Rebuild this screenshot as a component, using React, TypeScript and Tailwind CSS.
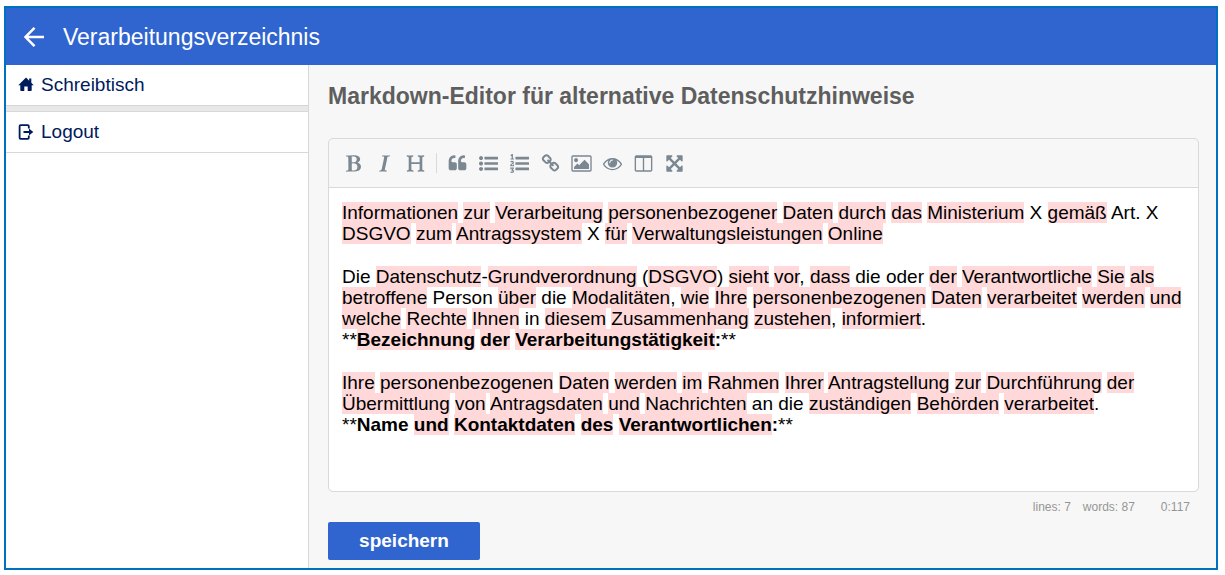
import React from 'react';

interface IconProps {
  path: string;
  viewBox?: string;
  className?: string;
}

const Icon: React.FC<IconProps> = ({ path, viewBox = '0 0 1792 1792', className = 'size-[19px]' }) => (
  <svg viewBox={viewBox} className={className} fill="currentColor" aria-hidden="true">
    <path d={path} />
  </svg>
);

const BAR = 'v192q0 13-9.500 22.500t-22.500 9.500h-1216q-13 0-22.500-9.500t-9.500-22.500v-192q0-13 9.500-22.500t22.500-9.500h1216q13 0 22.500 9.500t9.500 22.500z';
const DOT = 'q0 80-56 136t-136 56-136-56-56-136 56-136 136-56 136 56 56 136z';
const QUOTE = 'v384q0 80-56 136t-136 56h-384q-80 0-136-56t-56-136v-704q0-104 40.500-198.500t109.500-163.500 163.500-109.500 198.500-40.500h64q26 0 45 19t19 45v128q0 26-19 45t-45 19h-64q-106 0-181 75t-75 181v32q0 40 28 68t68 28h224q80 0 136 56t56 136z';

const FORMAT_TOOLS = [
  {
    label: 'Fett',
    path: 'M747 1521q74 32 140 32 376 0 376-335 0-114-41-180-27-44-61.5-74t-67.5-46.5-80.5-25-84-10.5-94.5-2q-73 0-101 10 0 53-.5 159t-.5 158q0 8-1 67.5t-.5 96.5 4.500 83.500 12 66.500zm-14-746q42 7 109 7 82 0 143-13t110-44.500 74.500-89.500 25.500-142q0-70-29-122.500t-79-82-108-43.500-124-14q-50 0-130 13 0 50 4 151t4 152q0 27-.5 80t-.5 79q0 46 1 69zm-541 889l2-94q15-4 85-16t106-27q7-12 12.500-27t8.500-33.500 5.500-32.500 3-37.500.5-34v-65.500q0-982-22-1025-4-8-22-14.500t-44.500-11-49.500-7-48.500-4.500-30.500-3l-4-83q98-2 340-11.500t373-9.500q23 0 68 .5t68 .5q70 0 136.500 13t128.500 42 108 71 74 104.500 28 137.500q0 52-16.500 95.500t-39 72-64.500 57.500-73 45-84 40q154 35 256.500 134t102.500 248q0 100-35 179.500t-93.500 130.500-138 85.500-163.500 48.500-176 14q-44 0-132-3t-132-3q-106 0-307 11t-231 12z',
  },
  {
    label: 'Kursiv',
    path: 'M384 1662l17-85q6-2 81.500-21.500t111.500-37.500q28-35 41-101 1-7 62-289t114-543.500 52-296.500v-25q-24-13-54.500-18.500t-69.500-8-58-5.500l19-103q33 2 120 6.500t149.500 7 120.500 2.500q48 0 98.500-2.500t121-7 98.500-6.500q-5 39-19 89-30 10-101.500 28.500t-108.500 33.500q-8 19-14 42.500t-9 40-7.500 45.500-6.500 42q-27 148-87.500 419.500t-77.500 355.500q-2 9-13 58t-20 90-16 83.500-6 57.500l1 18q17 4 185 31-3 44-16 99-11 0-32.500 1.500t-32.500 1.500q-29 0-87-10t-86-10q-138-2-206-2-51 0-143 9t-121 11z',
  },
  {
    label: 'Überschrift',
    path: 'M1682 1664q-44 0-132.500-3.500t-133.500-3.500q-44 0-132 3.500t-132 3.500q-24 0-37-20.500t-13-45.500q0-31 17-46t39-17 51-7 45-15q33-21 33-140l-1-391q0-21-1-31-13-4-50-4h-675q-38 0-51 4-1 10-1 31l-1 371q0 142 37 164 16 10 48 13t57 3.500 45 15 20 45.500q0 26-12.500 48t-36.500 22q-47 0-139.500-3.500t-138.500-3.500q-43 0-128 3.500t-127 3.500q-23 0-35.500-21t-12.500-45q0-30 15.500-45t36-17.500 47.500-7.500 42-15q33-23 33-143l-1-57v-813q0-3 .5-26t0-36.500-1.500-38.500-3.500-42-6.500-36.500-11-31.500-16-18q-15-10-45-12t-53-2-41-14-18-45q0-26 12-48t36-22q46 0 138.500 3.500t138.500 3.500q42 0 126.500-3.500t126.500-3.500q25 0 37.500 22t12.500 48q0 30-17 43.500t-38.500 14.500-49.500 4-43 13q-35 21-35 160l1 320q0 21 1 32 13 3 39 3h699q25 0 38-3 1-11 1-32l1-320q0-139-35-160-18-11-58.500-12.500t-66-13-25.500-49.500q0-26 12.500-48t37.500-22q44 0 132 3.500t132 3.500q43 0 129-3.500t129-3.500q25 0 37.500 22t12.500 48q0 30-17.500 44t-40 14.500-51.500 3-44 12.500q-35 23-35 161l1 943q0 119 34 140 16 10 46 13.500t53.500 4.500 41.500 15.500 18 44.500q0 26-12 48t-36 22z',
  },
];

const INSERT_TOOLS = [
  { label: 'Zitat', path: `M832 960${QUOTE}M1728 960${QUOTE}` },
  {
    label: 'Liste',
    path: `M384 1408${DOT}M384 896${DOT}M384 384${DOT}M1792 1312${BAR}M1792 800${BAR}M1792 288${BAR}`,
  },
  {
    label: 'Nummerierte Liste',
    path: `M381 1620q0 80-54.500 126t-135.500 46q-106 0-172-66l57-88q49 45 106 45 29 0 50.500-14.500t21.500-42.500q0-64-105-56l-26-56q8-10 32.500-43.500t42.500-54 37-38.500v-1q-16 0-48.500 1t-48.500 1v53h-106v-152h333v88l-95 115q51 12 81 49t30 88zm2-627v159h-362q-6-36-6-54 0-51 23.500-93t56.500-68 66-47.500 56.500-43.500 23.500-45q0-25-14.500-38.500t-39.500-13.500q-46 0-81 58l-85-59q24-51 71.500-79.500t105.500-28.500q73 0 123 41.500t50 112.500q0 50-34 91.500t-75 64.500-75.500 50.500-35.500 52.500h127v-60h105zM384 413v99h-335v-99h107q0-41 .5-121.500t.5-121.500v-12h-2q-8 17-50 54l-71-76 136-127h106v404h108zM1792 1312${BAR}M1792 800${BAR}M1792 288${BAR}`,
  },
  {
    label: 'Link',
    path: 'M1520 1216q0-40-28-68l-208-208q-28-28-68-28-42 0-72 32 3 3 19 18.500t21.500 21.500 15 19 13 25.500 3.500 27.500q0 40-28 68t-68 28q-15 0-27.500-3.500t-25.500-13-19-15-21.500-21.500-18.500-19q-33 31-33 73 0 40 28 68l206 207q27 27 68 27 40 0 68-26l147-146q28-28 28-67zm-703-705q0-40-28-68l-206-207q-28-28-68-28-39 0-68 27l-147 146q-28 28-28 67 0 40 28 68l208 208q27 27 68 27 42 0 72-31-3-3-19-18.500t-21.500-21.500-15-19-13-25.500-3.500-27.500q0-40 28-68t68-28q15 0 27.500 3.500t25.500 13 19 15 21.500 21.500 18.500 19q33-31 33-73zm895 705q0 120-85 203l-147 146q-83 83-203 83-121 0-204-85l-206-207q-83-83-83-203 0-123 88-209l-88-88q-86 88-208 88-120 0-204-84l-208-208q-84-84-84-204t85-203l147-146q83-83 203-83 121 0 204 85l206 207q83 83 83 203 0 123-88 209l88 88q86-88 208-88 120 0 204 84l208 208q84 84 84 204z',
  },
  {
    label: 'Bild',
    viewBox: '-64 0 1920 1792',
    className: 'h-[19px] w-[21px]',
    path: 'M576 576q0 80-56 136t-136 56-136-56-56-136 56-136 136-56 136 56 56 136zm1024 384v448h-1408v-192l320-320 160 160 512-512zm96-704h-1600q-13 0-22.500 9.500t-9.500 22.500v1216q0 13 9.500 22.500t22.500 9.500h1600q13 0 22.500-9.500t9.500-22.500v-1216q0-13-9.500-22.500t-22.500-9.500zm160 32v1216q0 66-47 113t-113 47h-1600q-66 0-113-47t-47-113v-1216q0-66 47-113t113-47h1600q66 0 113 47t47 113z',
  },
  {
    label: 'Vorschau',
    path: 'M1664 960q-152-236-381-353 61 104 61 225 0 185-131.500 316.500t-316.500 131.500-316.500-131.500-131.500-316.500q0-121 61-225-229 117-381 353 133 205 333.500 326.500t434.500 121.500 434.500-121.500 333.500-326.500zm-720-384q0-20-14-34t-34-14q-125 0-214.500 89.500t-89.500 214.500q0 20 14 34t34 14 34-14 14-34q0-86 61-147t147-61q20 0 34-14t14-34zm848 384q0 34-20 69-140 230-376.500 368.500t-499.500 138.500-499.500-139-376.500-368q-20-35-20-69t20-69q140-229 376.500-368t499.500-139 499.500 139 376.500 368q20 35 20 69z',
  },
  {
    label: 'Geteilte Ansicht',
    path: 'M224 1536h608v-1152h-640v1120q0 13 9.500 22.500t22.500 9.500zm1376-32v-1120h-640v1152h608q13 0 22.500-9.500t9.500-22.500zm128-1216v1216q0 66-47 113t-113 47h-1344q-66 0-113-47t-47-113v-1216q0-66 47-113t113-47h1344q66 0 113 47t47 113z',
  },
  {
    label: 'Vollbild',
    path: 'M1411 541l-355 355 355 355 144-144q29-31 70-14 39 17 39 59v448q0 26-19 45t-45 19h-448q-42 0-59-40-17-39 14-69l144-144-355-355-355 355 144 144q31 30 14 69-17 40-59 40h-448q-26 0-45-19t-19-45v-448q0-42 40-59 39-17 69 14l144 144 355-355-355-355-144 144q-19 19-45 19-12 0-24-5-40-17-40-59v-448q0-26 19-45t45-19h448q42 0 59 40 17 39-14 69l-144 144 355 355 355-355-144-144q-31-30-14-69 17-40 59-40h448q26 0 45 19t19 45v448q0 42-39 59-13 5-25 5-26 0-45-19z',
  },
];

// Words in square brackets are flagged by the spell checker
const PARAGRAPHS = [
  [
    '[Informationen] [zur] [Verarbeitung] [personenbezogener] [Daten] [durch] [das] [Ministerium] X [gemäß] Art. X [DSGVO] [zum] [Antragssystem] X [für] [Verwaltungsleistungen] [Online]',
  ],
  [
    'Die [Datenschutz]-[Grundverordnung] ([DSGVO]) [sieht] [vor], [dass] die oder [der] [Verantwortliche] [Sie] [als] [betroffene] Person [über] die [Modalitäten], [wie] [Ihre] [personenbezogenen] [Daten] [verarbeitet] [werden] [und] [welche] [Rechte] [Ihnen] in [diesem] [Zusammenhang] [zustehen], [informiert].',
    '**[Bezeichnung] [der] [Verarbeitungstätigkeit]:**',
  ],
  [
    '[Ihre] [personenbezogenen] [Daten] [werden] [im] [Rahmen] [Ihrer] [Antragstellung] [zur] [Durchführung] [der] [Übermittlung] [von] [Antragsdaten] [und] [Nachrichten] an die [zuständigen] [Behörden] [verarbeitet].',
    '**Name [und] [Kontaktdaten] [des] [Verantwortlichen]:**',
  ],
];

const SpellChecked: React.FC<{ text: string }> = ({ text }) => (
  <>
    {text.split(/[[\]]/).map((part, idx) =>
      idx % 2 === 1 ? (
        <span key={idx} className="bg-[#ffd9d9]">{part}</span>
      ) : (
        part
      )
    )}
  </>
);

const EditorLine: React.FC<{ text: string }> = ({ text }) => {
  if (text.startsWith('**')) {
    return (
      <p>
        **<strong><SpellChecked text={text.slice(2, -2)} /></strong>**
      </p>
    );
  }
  return <p><SpellChecked text={text} /></p>;
};

const ToolButton: React.FC<IconProps & { label: string }> = ({ label, ...icon }) => (
  <button type="button" aria-label={label} className="flex h-[30px] w-[31px] items-center justify-center">
    <Icon {...icon} />
  </button>
);

const App: React.FC = () => {
  return (
    <div className="min-h-screen bg-white pt-1.5 pr-[7px] pb-[5px] pl-1 font-['Liberation_Sans',Arial,sans-serif]">
      <div className="flex min-h-[calc(100vh-11px)] flex-col border-2 border-[#0070c0] bg-[#f7f7f7]">
        {/* --- HEADER --- */}
        <header className="flex h-[57px] items-center gap-[17px] bg-[#3065cf] pl-4 text-white">
          <a href="#" aria-label="Zurück">
            <svg viewBox="0 0 24 24" className="size-6" fill="none" stroke="currentColor" strokeWidth="2.5" aria-hidden="true">
              <path d="M22 12H4M12.500 2.800L3.500 12l9 9.200" />
            </svg>
          </a>
          <h1 className="text-[23px] leading-7">Verarbeitungsverzeichnis</h1>
        </header>

        <div className="flex grow">
          {/* --- SIDEBAR --- */}
          <nav className="w-[303px] shrink-0 border-r border-[#d8d8d8] bg-white text-[19px] leading-6 text-[#001a5e]">
            <a href="#" className="flex h-[41px] items-center gap-[7px] border-b border-[#d4d4d4] pl-3">
              <svg viewBox="0 0 16 16" className="size-4" fill="currentColor" aria-hidden="true">
                <path d="M8 0.500L0.300 8.300H2.300V13.200Q2.300 14 3.100 14H6.300V9.500H9.700V14H12.900Q13.700 14 13.700 13.200V8.300H15.700L13.300 5.800V1.500H11.200V3.700Z" />
              </svg>
              Schreibtisch
            </a>
            <div className="h-[5px] bg-[#e8e8e8]" />
            <a href="#" className="flex h-[42px] items-center gap-[7px] border-y border-[#d8d8d8] pl-3">
              <svg viewBox="0 0 16 16" className="size-4" fill="none" stroke="currentColor" strokeWidth="1.8" aria-hidden="true">
                <path d="M10.800 4.500V2.200Q10.800 1.200 9.800 1.200H2.600Q1.600 1.200 1.600 2.200V13.800Q1.600 14.800 2.600 14.800H9.800Q10.800 14.800 10.800 13.800V11.500M5.500 8H12" />
                <path d="M11 4.500L15.300 8L11 11.500Z" fill="currentColor" stroke="none" />
              </svg>
              Logout
            </a>
          </nav>

          {/* --- EDITOR --- */}
          <main className="min-w-0 grow pt-[17px] pr-[17px] pb-2 pl-[19px]">
            <h2 className="text-[23px] leading-7 font-bold text-[#5e5e5e]">
              Markdown-Editor für alternative Datenschutzhinweise
            </h2>

            <div className="mt-7 rounded-[5px] border border-[#d9d9d9]">
              <div role="toolbar" aria-label="Formatierung" className="flex h-12 items-center pl-[9px] text-[#7b8791]">
                {FORMAT_TOOLS.map((tool) => (
                  <ToolButton key={tool.label} {...tool} />
                ))}
                <div className="mx-[5px] h-5 w-px bg-[#d9d9d9]" />
                {INSERT_TOOLS.map((tool) => (
                  <ToolButton key={tool.label} {...tool} />
                ))}
              </div>
              <div
                role="textbox"
                aria-multiline="true"
                aria-label="Datenschutzhinweise"
                contentEditable
                suppressContentEditableWarning
                spellCheck={false}
                className="flex min-h-[304px] flex-col gap-[22px] rounded-b-[5px] border-t border-[#d9d9d9] bg-white px-[13px] py-3.5 text-[19px] leading-[21px] text-black"
              >
                {PARAGRAPHS.map((lines, idx) => (
                  <div key={idx}>
                    {lines.map((line) => (
                      <EditorLine key={line} text={line} />
                    ))}
                  </div>
                ))}
              </div>
            </div>

            <div className="flex h-[30px] justify-end pt-[7px] pr-[9px] text-xs leading-4 text-[#959694]">
              <span>lines: 7</span>
              <span className="ml-3">words: 87</span>
              <span className="ml-[26px]">0:117</span>
            </div>

            <button type="button" className="h-[38px] w-[152px] rounded-xs bg-[#3065cf] text-[19px] font-bold text-white">
              speichern
            </button>
          </main>
        </div>
      </div>
    </div>
  );
};

export default App;
